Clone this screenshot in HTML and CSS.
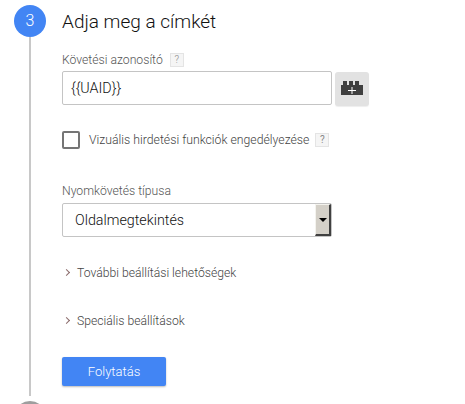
FILE: index.html
```html
<!DOCTYPE html>
<html lang="hu">
<head>
  <meta charset="UTF-8">
  <meta name="viewport" content="width=device-width, initial-scale=1.0">
  <title>Adja meg a címkét</title>
  <link rel="stylesheet" href="styles.css">
</head>
<body>
  <div class="step">
    <!-- Lépésszám és függőleges vonal -->
    <div class="rail">
      <div class="step-number">3</div>
      <div class="rail-line"></div>
      <div class="next-step"></div>
    </div>

    <div class="content">
      <h1>Adja meg a címkét</h1>

      <div class="label tracking-label">Követési azonosító <span class="help">?</span></div>
      <div class="input-row">
        <div class="text-input">{{UAID}}</div>
        <button class="var-btn" aria-label="Változó hozzáadása">
          <svg width="22" height="14" viewBox="0 0 22 14">
            <path d="M0 4h2V0h4v4h2V0h4v4h2V0h4v4h4v10H0z" fill="#3f3f3f"/>
            <path d="M10.500 6h1V9h3.500v1h-3.500v3h-1v-3H7V9h3.500z" fill="#fff"/>
          </svg>
        </button>
      </div>

      <label class="check-row">
        <span class="checkbox"></span>
        <span class="check-text">Vizuális hirdetési funkciók engedélyezése</span>
        <span class="help">?</span>
      </label>

      <div class="label type-label">Nyomkövetés típusa</div>
      <div class="select">
        <span class="select-value">Oldalmegtekintés</span>
        <span class="select-arrow"><span class="arrow-down"></span></span>
      </div>

      <div class="expander first"><span class="chevron"></span>További beállítási lehetőségek</div>
      <div class="expander second"><span class="chevron"></span>Speciális beállítások</div>

      <button class="continue-btn">Folytatás</button>
    </div>
  </div>
</body>
</html>
```

FILE: styles.css
```css
html, body {
  height: 100%;
}

body {
  margin: 0;
  background: #fff;
  font-family: Roboto, Arial, sans-serif;
  color: #444;
  overflow: hidden;
}

.step {
  display: flex;
  padding: 5px 0 0 14px;
}

.rail {
  width: 32px;
  display: flex;
  flex-direction: column;
  flex-shrink: 0;
}

.step-number {
  width: 32px;
  height: 32px;
  line-height: 32px;
  border-radius: 50%;
  background: #4285f4;
  color: #fff;
  font-size: 16px;
  font-weight: 300;
  text-align: center;
}

.rail-line {
  width: 2px;
  height: 359px;
  margin-left: 15px;
  background: #c8c8c8;
}

/* Only the top of the next step's circle is on screen */
.next-step {
  width: 32px;
  height: 3px;
  margin-top: 5px;
  overflow: hidden;
}

.next-step::before {
  content: "";
  display: block;
  width: 32px;
  height: 32px;
  border-radius: 50%;
  background: #9e9e9e;
}

.content {
  margin-left: 16px;
  width: 320px;
}

h1 {
  margin: 0;
  font-size: 19px;
  font-weight: 300;
  line-height: 24px;
  color: #111;
  padding-top: 5px;
}

.label {
  font-size: 12.200px;
  line-height: 16px;
  font-weight: 300;
  color: #555;
}

.tracking-label {
  margin-top: 18px;
}

.help {
  display: inline-block;
  width: 12px;
  height: 12px;
  margin-left: 4px;
  line-height: 12px;
  border: 1px solid #e4e4e4;
  background: #f5f5f5;
  color: #888;
  font-size: 10px;
  text-align: center;
  vertical-align: 1px;
}

.input-row {
  display: flex;
  margin-top: 3px;
  gap: 3px;
}

.text-input {
  box-sizing: border-box;
  width: 270px;
  height: 34px;
  padding-left: 8px;
  line-height: 32px;
  border: 1px solid #c4c4c4;
  border-radius: 2px;
  font-size: 14.300px;
  font-weight: 300;
  color: #111;
}

.var-btn {
  width: 34px;
  height: 34px;
  margin-top: 1px;
  padding: 0;
  border: none;
  border-radius: 3px;
  background: #e2e2e2;
  box-shadow: 0 1px 1px #eee;
}

.check-row {
  display: flex;
  align-items: center;
  margin-top: 25px;
}

.check-row .help {
  margin-left: 6px;
}

.checkbox {
  box-sizing: border-box;
  width: 18px;
  height: 18px;
  border: 2px solid #757575;
  border-radius: 2px;
}

.check-text {
  margin-left: 9px;
  font-size: 12.250px;
  font-weight: 300;
  color: #444;
}

.type-label {
  margin-top: 34px;
}

.select {
  box-sizing: border-box;
  display: flex;
  justify-content: space-between;
  width: 270px;
  height: 34px;
  margin-top: 4px;
  border: 1px solid #c4c4c4;
  border-radius: 2px;
}

.select-value {
  padding-left: 12px;
  line-height: 32px;
  font-size: 14.300px;
  font-weight: 300;
  color: #111;
}

.select-arrow {
  box-sizing: border-box;
  display: flex;
  align-items: center;
  justify-content: center;
  width: 16px;
  height: 32px;
  background: #d4d0c8;
  border-left: 1px solid #f4f3ee;
  border-top: 1px solid #f4f3ee;
  border-right: 2px solid #404040;
  border-bottom: 2px solid #404040;
}

.arrow-down {
  border-left: 4px solid transparent;
  border-right: 4px solid transparent;
  border-top: 4px solid #000;
}

.expander {
  display: flex;
  align-items: center;
  font-size: 12.200px;
  font-weight: 300;
  line-height: 16px;
  color: #444;
}

.expander.first {
  margin-top: 28px;
}

.expander.second {
  margin-top: 32px;
}

.chevron {
  box-sizing: border-box;
  width: 5px;
  height: 5px;
  margin: 0 8px 1px 2px;
  border-top: 1px solid #8a6a6a;
  border-right: 1px solid #8a6a6a;
  transform: rotate(45deg);
}

.continue-btn {
  display: block;
  width: 104px;
  height: 29px;
  margin-top: 28px;
  padding: 0;
  border: none;
  border-radius: 2px;
  background: #4285f4;
  box-shadow: 0 1px 2px #bbb;
  color: #fff;
  font-family: Roboto, Arial, sans-serif;
  font-size: 13px;
  font-weight: 300;
}
```
